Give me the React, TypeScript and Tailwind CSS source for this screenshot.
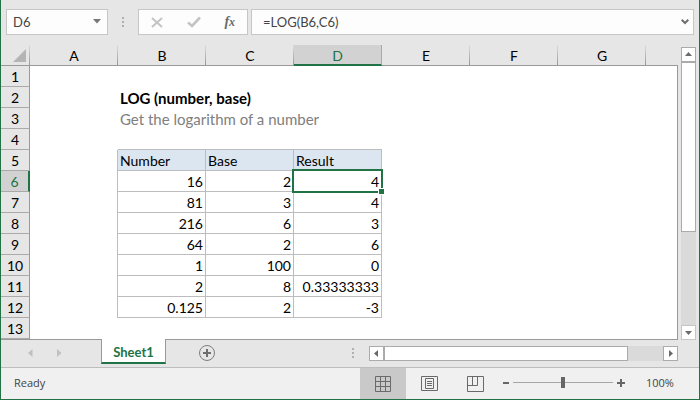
import React from "react";
import clsx from "clsx";

const columns = ["A", "B", "C", "D", "E", "F", "G"];
const rows = Array.from({ length: 13 }, (_, i) => i + 1);
const active = { column: "D", row: 6 };

const cells: Record<string, string> = {
  B2: "LOG (number, base)",
  B3: "Get the logarithm of a number",
  B5: "Number", C5: "Base", D5: "Result",
  B6: "16", C6: "2", D6: "4",
  B7: "81", C7: "3", D7: "4",
  B8: "216", C8: "6", D8: "3",
  B9: "64", C9: "2", D9: "6",
  B10: "1", C10: "100", D10: "0",
  B11: "2", C11: "8", D11: "0.33333333",
  B12: "0.125", C12: "2", D12: "-3",
};

type ArrowProps = { label: string; points: string; className?: string };

function ArrowButton({ label, points, className }: ArrowProps) {
  return (
    <button
      type="button"
      aria-label={label}
      className={clsx("flex size-[15px] shrink-0 items-center justify-center border bg-white", className)}
    >
      <svg width="13" height="13" viewBox="0 0 13 13" fill="#6a6a6a" aria-hidden="true">
        <polygon points={points} />
      </svg>
    </button>
  );
}

function Grip() {
  return (
    <div className="flex flex-col gap-0.5" aria-hidden="true">
      <span className="size-0.5 bg-[#b0b0b0]" />
      <span className="size-0.5 bg-[#b0b0b0]" />
      <span className="size-0.5 bg-[#b0b0b0]" />
    </div>
  );
}

function FormulaBar() {
  return (
    <div className="flex h-[45px] items-start pt-[9px] pr-[5px] pl-[5px]">
      <div className="flex h-[26px] w-[102px] shrink-0 items-center border border-[#c6c6c6] bg-[#fdfdfd]">
        <input
          aria-label="Name box"
          defaultValue="D6"
          className="h-6 min-w-0 flex-1 bg-transparent pl-1.5 text-[13px] text-[#444] outline-none"
        />
        <button type="button" aria-label="Show names" className="flex h-6 w-3.5 items-center">
          <svg width="8" height="8" viewBox="0 0 8 8" fill="#777" aria-hidden="true">
            <polygon points="0,1 8,1 4,5.5" />
          </svg>
        </button>
      </div>
      <div className="flex h-[26px] w-[30px] shrink-0 items-center justify-center">
        <Grip />
      </div>
      <div className="flex h-[26px] w-[110px] shrink-0 items-center justify-around border border-[#c6c6c6] bg-[#fdfdfd]">
        <button type="button" aria-label="Cancel">
          <svg width="12" height="12" viewBox="0 0 12 12" stroke="#c4c4c4" strokeWidth="2" aria-hidden="true">
            <path d="M1 2 L11 11 M11 2 L1 11" />
          </svg>
        </button>
        <button type="button" aria-label="Enter">
          <svg width="14" height="12" viewBox="0 0 14 12" fill="none" stroke="#c4c4c4" strokeWidth="2.6" aria-hidden="true">
            <path d="M1 6.5 L5 10 L13 1.5" />
          </svg>
        </button>
        <button
          type="button"
          aria-label="Insert function"
          className="flex items-baseline font-['Liberation_Serif',serif] leading-4 font-bold text-[#6a6a6a] italic"
        >
          <span className="text-sm leading-4">f</span>
          <span className="text-xs leading-4">x</span>
        </button>
      </div>
      <div className="ml-[3px] flex h-[26px] min-w-0 flex-1 items-center border border-[#c6c6c6] bg-[#fdfdfd]">
        <input
          aria-label="Formula bar"
          defaultValue="=LOG(B6,C6)"
          className="h-6 min-w-0 flex-1 bg-transparent pl-[11px] text-[13px] text-[#444] outline-none"
        />
        <button type="button" aria-label="Expand formula bar" className="flex h-6 w-3 items-center">
          <svg width="8" height="6" viewBox="0 0 8 6" fill="none" stroke="#6f6f6f" strokeWidth="2" aria-hidden="true">
            <path d="M0.7 0.8 L4 4 L7.3 0.8" />
          </svg>
        </button>
      </div>
    </div>
  );
}

function Cell({ column, row }: { column: string; row: number }) {
  const text = cells[column + row];
  const inTable = row >= 5 && row <= 12;
  const isHeading = row === 2 || row === 3;
  const isActive = column === active.column && row === active.row;
  return (
    <td
      className={clsx(
        "h-[21px] p-0 whitespace-nowrap",
        inTable && "ABCD".includes(column) && "border-r border-[#bdbdbd]",
        row >= 4 && row <= 12 && "BCD".includes(column) && "border-b border-[#bdbdbd]",
        row === 5 && "BCD".includes(column) && "bg-[#dce6f1]",
        row > 5 ? "pr-0.5 text-right" : "pl-0.5 text-left",
        row === 2 && "font-bold",
        row === 3 && "text-[#808080]",
        isActive && "relative"
      )}
    >
      <div className={clsx("h-5", isHeading ? "text-[15px] leading-5" : "leading-[22px]")}>{text}</div>
      {isActive && (
        <div className="pointer-events-none absolute -top-0.5 -right-0.5 -bottom-0.5 -left-0.5 border-2 border-[#217346]">
          <span className="absolute -right-[4px] -bottom-[4px] size-[7px] border border-white bg-[#217346]" />
        </div>
      )}
    </td>
  );
}

function Sheet() {
  return (
    <table className="w-full min-w-0 flex-1 table-fixed border-separate border-spacing-0 border-b border-[#999] bg-white text-sm text-black">
      <colgroup>
        <col className="w-[29px]" />
        {columns.map((c) => (
          <col key={c} className="w-[88px]" />
        ))}
        <col />
      </colgroup>
      <thead>
        <tr className="bg-[#e6e6e6]">
          <th className="h-[21px] border-b border-[#999] bg-[linear-gradient(#dcdcdc,#999)] bg-[length:1px_100%] bg-right bg-no-repeat p-0">
            <button type="button" aria-label="Select all" className="flex h-5 w-full items-end justify-end pr-1 pb-[3px]">
              <svg width="13" height="13" viewBox="0 0 13 13" fill="#b4b4b4" aria-hidden="true">
                <polygon points="0,13 13,13 13,0" />
              </svg>
            </button>
          </th>
          {columns.map((c) => (
            <th
              key={c}
              scope="col"
              className={clsx(
                "h-[21px] p-0 font-normal",
                c === active.column
                  ? "border-r border-b-2 border-r-[#a8a8a8] border-b-[#217346] bg-[#d2d2d2] text-[#217346]"
                  : "border-b border-[#999] bg-[linear-gradient(#dcdcdc,#999)] bg-[length:1px_100%] bg-right bg-no-repeat"
              )}
            >
              <div className={clsx("leading-[22px]", c === active.column ? "h-[19px]" : "h-5")}>{c}</div>
            </th>
          ))}
          <th className="border-b border-[#999] p-0" />
        </tr>
      </thead>
      <tbody>
        {rows.map((r) => (
          <tr key={r}>
            <th
              scope="row"
              className={clsx(
                "h-[21px] border-b border-b-[#aaa] p-0 font-normal",
                r === active.row
                  ? "border-r-2 border-r-[#217346] bg-[#d2d2d2] text-[#217346]"
                  : "border-r border-r-[#999] bg-[#e6e6e6]"
              )}
            >
              <div className="h-5 leading-[22px]">{r}</div>
            </th>
            {columns.map((c) => (
              <Cell key={c} column={c} row={r} />
            ))}
            <td className="border-r border-[#999] p-0" />
          </tr>
        ))}
      </tbody>
    </table>
  );
}

function VerticalScrollbar() {
  return (
    <div className="mt-0.5 mr-[3px] ml-[3px] flex w-[15px] shrink-0 flex-col bg-[#dadada]">
      <ArrowButton label="Scroll up" points="3,8 10,8 6.5,4" className="border-[#ababab]" />
      <div className="flex flex-1 flex-col">
        <div className="h-[170px] border border-[#ababab] bg-white" />
      </div>
      <ArrowButton label="Scroll down" points="3,5 10,5 6.5,9" className="border-[#c6c6c6]" />
    </div>
  );
}

function TabBar() {
  return (
    <div className="flex h-7 items-start border-b border-[#bdbdbd]">
      <div className="flex h-[25px] w-[100px] shrink-0 items-center gap-6 pl-[27px]">
        <button type="button" aria-label="Previous sheet">
          <svg width="5" height="8" viewBox="0 0 5 8" fill="#c0c0c0" aria-hidden="true">
            <polygon points="4.5,0 4.5,8 0,4" />
          </svg>
        </button>
        <button type="button" aria-label="Next sheet">
          <svg width="5" height="8" viewBox="0 0 5 8" fill="#c0c0c0" aria-hidden="true">
            <polygon points="0,0 0,8 4.5,4" />
          </svg>
        </button>
      </div>
      <button
        type="button"
        className="-mt-px h-[25px] w-[65px] shrink-0 border-x border-b-2 border-x-[#999] border-b-[#217346] bg-white pt-0.5 text-[13px] leading-5 font-bold text-[#217346]"
      >
        Sheet1
      </button>
      <button type="button" aria-label="New sheet" className="mt-1 ml-8 shrink-0">
        <svg width="18" height="18" viewBox="0 0 18 18" fill="none" aria-hidden="true">
          <circle cx="9" cy="9" r="7.5" stroke="#7f7f7f" />
          <path d="M9 5 V13 M5 9 H13" stroke="#6f6f6f" strokeWidth="2" />
        </svg>
      </button>
      <div className="mt-2 flex flex-1 justify-end pr-[15px]">
        <Grip />
      </div>
      <div className="mt-1.5 mr-[21px] flex w-[309px] shrink-0 bg-[#dadada]">
        <ArrowButton label="Scroll left" points="8,3 8,10 4,6.5" className="border-[#ababab]" />
        <div className="flex flex-1">
          <div className="w-[244px] border border-[#ababab] bg-white" />
        </div>
        <ArrowButton label="Scroll right" points="5,3 5,10 9,6.5" className="border-[#ababab]" />
      </div>
    </div>
  );
}

function StatusBar() {
  return (
    <div className="flex h-[31px] items-stretch bg-[#f0f0f0] font-['Open_Sans','Noto_Sans',sans-serif] text-[11px] text-[#444]">
      <span className="flex flex-1 items-center pl-[13px]">Ready</span>
      <button type="button" aria-label="Normal view" className="flex w-[46px] items-center justify-center bg-[#c9c9c9]">
        <svg width="16" height="16" viewBox="0 0 16 16" fill="none" stroke="#6a6a6a" aria-hidden="true">
          <path d="M0.5 0.5 H15.5 V15.5 H0.5 Z M5.5 0.5 V15.5 M10.5 0.5 V15.5 M0.5 5.5 H15.5 M0.5 10.5 H15.5" />
        </svg>
      </button>
      <button type="button" aria-label="Page layout view" className="flex w-[46px] items-center justify-center">
        <svg width="17" height="15" viewBox="0 0 17 15" fill="none" stroke="#6a6a6a" aria-hidden="true">
          <path d="M0.5 0.5 H16.5 V14.5 H0.5 Z M4.5 2.5 H12.5 V12.5 H4.5 Z M6 5.5 H11 M6 7.5 H11 M6 9.5 H11" />
        </svg>
      </button>
      <button type="button" aria-label="Page break preview" className="flex w-[46px] items-center justify-center">
        <svg width="17" height="16" viewBox="0 0 17 16" fill="none" stroke="#6a6a6a" aria-hidden="true">
          <path d="M0.5 0.5 H16.5 V15.5 H0.5 Z M5.5 0.5 V9.5 M0.5 9.5 H10.5 V0.5" />
        </svg>
      </button>
      <div className="ml-[5px] flex items-center pb-0.5">
        <button type="button" aria-label="Zoom out">
          <svg width="6" height="8" viewBox="0 0 6 8" aria-hidden="true">
            <path d="M0 4 H6" stroke="#666" strokeWidth="2" />
          </svg>
        </button>
        <input
          type="range"
          aria-label="Zoom"
          min={0}
          max={100}
          defaultValue={50}
          className="mx-1 h-[11px] w-[100px] appearance-none bg-[linear-gradient(#a6a6a6,#a6a6a6)] bg-[length:100%_1px] bg-center bg-no-repeat [&::-webkit-slider-thumb]:h-[11px] [&::-webkit-slider-thumb]:w-1 [&::-webkit-slider-thumb]:appearance-none [&::-webkit-slider-thumb]:bg-[#666]"
        />
        <button type="button" aria-label="Zoom in">
          <svg width="8" height="8" viewBox="0 0 8 8" aria-hidden="true">
            <path d="M0 4 H8 M4 0 V8" stroke="#666" strokeWidth="2" />
          </svg>
        </button>
      </div>
      <span className="flex w-[74px] items-center pl-[21px]">100%</span>
    </div>
  );
}

export default function App() {
  return (
    <main className="border-x border-b border-[#217346] bg-[#e6e6e6] font-['Lato','Open_Sans',sans-serif]">
      <FormulaBar />
      <div className="flex">
        <Sheet />
        <VerticalScrollbar />
      </div>
      <TabBar />
      <StatusBar />
    </main>
  );
}
